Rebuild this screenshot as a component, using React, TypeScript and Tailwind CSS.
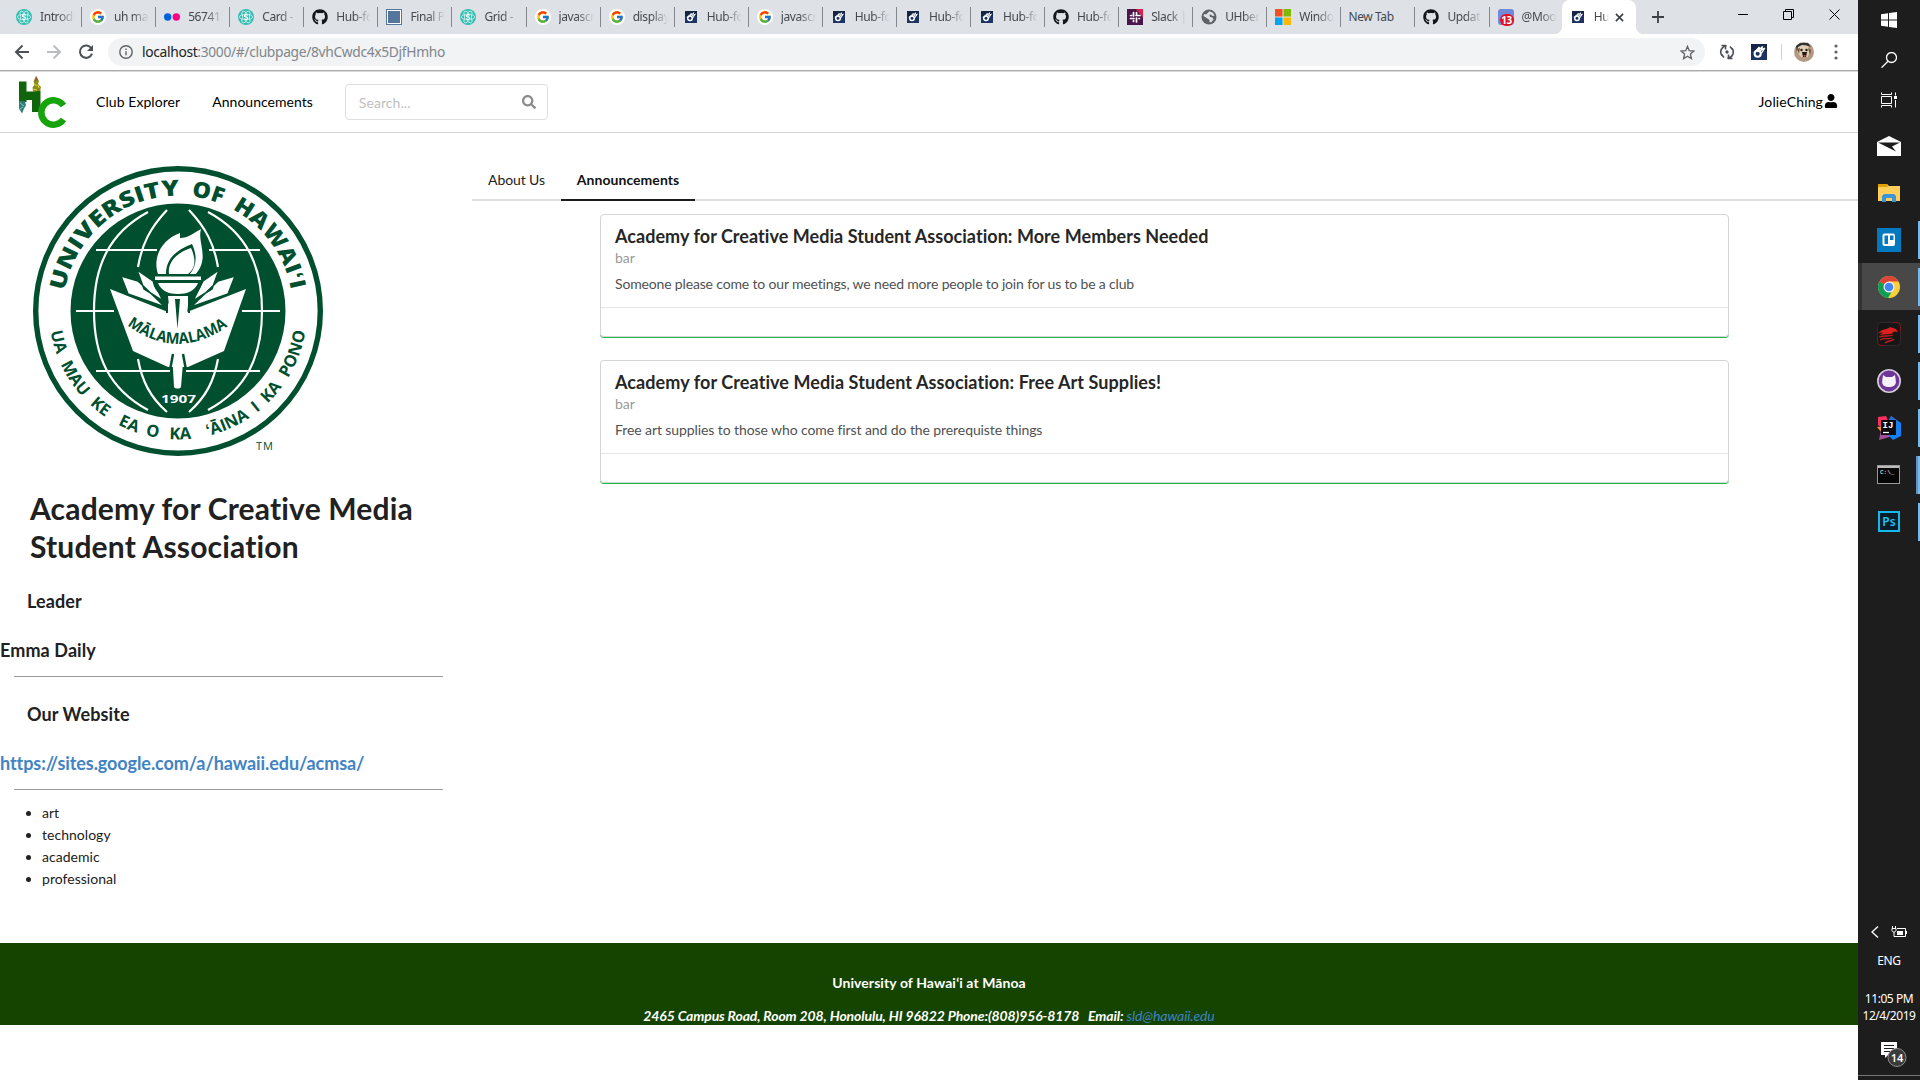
import React from "react";
import { FaGithub, FaSearch, FaUser } from "react-icons/fa";
import { FcGoogle } from "react-icons/fc";

const FAVICON = "block h-4 w-4 shrink-0";

function SemanticIcon() {
  return (
    <svg viewBox="0 0 16 16" className={FAVICON}>
      <circle cx="8" cy="8" r="8" fill="#35bdb2" />
      <g fill="none" stroke="#d5f3f0" strokeWidth=".8">
        <ellipse cx="8" cy="8" rx="6.6" ry="2.7" />
        <ellipse cx="8" cy="8" rx="6.6" ry="2.7" transform="rotate(60 8 8)" />
        <ellipse cx="8" cy="8" rx="6.6" ry="2.7" transform="rotate(120 8 8)" />
      </g>
      <circle cx="8" cy="8" r="3" fill="#35bdb2" />
      <path d="M9.8 6.3C8.8 5.3 6.5 5.6 6.5 6.9C6.5 8.2 9.7 7.7 9.7 9.2C9.7 10.5 7.3 10.7 6.2 9.7" fill="none" stroke="#fff" strokeWidth="1.3" />
    </svg>
  );
}

function GoogleIcon() {
  return (
    <span className="flex h-4 w-4 shrink-0 items-center justify-center rounded-full bg-white">
      <FcGoogle size={14} />
    </span>
  );
}

function FlickrIcon() {
  return (
    <svg viewBox="0 0 16 16" className={FAVICON}>
      <circle cx="3.7" cy="8" r="3.7" fill="#0063dc" />
      <circle cx="12.3" cy="8" r="3.7" fill="#ff0084" />
    </svg>
  );
}

function MeteorIcon({ size = 16, pad = 2 }: { size?: number; pad?: number }) {
  return (
    <svg viewBox="0 0 12 12" width={size - pad * 2} height={size - pad * 2} className="block shrink-0" style={{ margin: pad }}>
      <rect width="12" height="12" fill="#1d3462" />
      <rect width="12" height="5" fill="#152545" />
      <circle cx="5" cy="7.3" r="2.3" fill="none" stroke="#fff" strokeWidth="1.5" />
      <path d="M2.200 6.500L6.300 2.300L5.500 4.700L8.700 1.800L7.400 4.800L10.400 3L7.700 7" fill="none" stroke="#fff" strokeWidth="1" />
    </svg>
  );
}

function SlackIcon() {
  return (
    <svg viewBox="0 0 16 16" className={FAVICON}>
      <rect width="16" height="16" fill="#4a154b" />
      <path d="M9 0h7v9z" fill="#d8234f" />
      <g stroke="#fff" strokeWidth="1.7" strokeLinecap="round">
        <path d="M6.5 3.5v3.500M9.500 9v4M3.500 9.500h3.500M9 6.500h4M9.500 3.500v1.500M3.500 6.500h1M6.500 11.500v1M12 9.500h.5" />
      </g>
    </svg>
  );
}

function GlobeIcon() {
  return (
    <svg viewBox="0 0 16 16" className={FAVICON}>
      <circle cx="8" cy="8" r="7.500" fill="#5f6368" />
      <path d="M8.500 2.200l3.500 1.500 1.500 3-2 .3-1.500-1.500-1.500.5.5 2 2.500.5 1 2L10 13.500l-1.500-.5v-2L6.500 9.500 2.500 7 3 5l2 .500z" fill="#dee1e6" />
    </svg>
  );
}

function MicrosoftIcon() {
  return (
    <svg viewBox="0 0 16 16" className={FAVICON}>
      <path d="M0 0h7.500v7.500H0z" fill="#f25022" />
      <path d="M8.500 0H16v7.500H8.500z" fill="#7fba00" />
      <path d="M0 8.500h7.500V16H0z" fill="#00a4ef" />
      <path d="M8.500 8.500H16V16H8.500z" fill="#ffb900" />
    </svg>
  );
}

function DiscordBadgeIcon() {
  return (
    <span className="relative block h-4 w-4 shrink-0 rounded-[3px] bg-[#7289da]">
      <span className="absolute top-[5px] left-[2px] flex h-[12px] w-[14px] items-center justify-center rounded-full bg-[#e01020] text-[10px] leading-none font-bold tracking-[-0.5px] text-white">13</span>
    </span>
  );
}

type Kind = "semantic" | "google" | "flickr" | "github" | "square" | "meteor" | "slack" | "globe" | "ms" | "none" | "discord";

function Favicon({ kind }: { kind: Kind }) {
  switch (kind) {
    case "semantic":
      return <SemanticIcon />;
    case "google":
      return <GoogleIcon />;
    case "flickr":
      return <FlickrIcon />;
    case "github":
      return <FaGithub size={16} className="shrink-0 text-[#14171a]" />;
    case "square":
      return <span className="block h-4 w-4 shrink-0 border border-[#54759c] bg-[#54759c] shadow-[inset_0_0_0_1px_#fff]" />;
    case "meteor":
      return <MeteorIcon />;
    case "slack":
      return <SlackIcon />;
    case "globe":
      return <GlobeIcon />;
    case "ms":
      return <MicrosoftIcon />;
    case "discord":
      return <DiscordBadgeIcon />;
    default:
      return null;
  }
}

const tabs: { kind: Kind; label: string }[] = [
  { kind: "semantic", label: "Introdu" },
  { kind: "google", label: "uh ma" },
  { kind: "flickr", label: "567415" },
  { kind: "semantic", label: "Card -" },
  { kind: "github", label: "Hub-fo" },
  { kind: "square", label: "Final P" },
  { kind: "semantic", label: "Grid -" },
  { kind: "google", label: "javascr" },
  { kind: "google", label: "display" },
  { kind: "meteor", label: "Hub-fo" },
  { kind: "google", label: "javascr" },
  { kind: "meteor", label: "Hub-fo" },
  { kind: "meteor", label: "Hub-fo" },
  { kind: "meteor", label: "Hub-fo" },
  { kind: "github", label: "Hub-fo" },
  { kind: "slack", label: "Slack |" },
  { kind: "globe", label: "UHber" },
  { kind: "ms", label: "Windo" },
  { kind: "none", label: "New Tab" },
  { kind: "github", label: "Updat" },
  { kind: "discord", label: "@Moo" },
];

function TabStrip() {
  return (
    <div className="flex h-[34px] bg-[#dee1e6] pl-2 text-[12px] tracking-[-0.4px] text-[#45494d]">
      {tabs.map((t, i) => (
        <div key={i} className="flex h-[34px] w-[74.08px] shrink-0 items-center pl-2">
          <Favicon kind={t.kind} />
          <span
            className={
              t.kind === "none"
                ? "-ml-px w-[54px] overflow-hidden whitespace-nowrap"
                : "ml-2 w-[36px] overflow-hidden whitespace-nowrap [mask-image:linear-gradient(to_right,#000_50%,transparent_97%)]"
            }
          >
            {t.label}
          </span>
          {i < tabs.length - 1 && <span className="ml-auto h-5 w-px bg-[#85898e]" />}
        </div>
      ))}
      <div className="relative -ml-[2px] flex h-[34px] w-[74px] items-center rounded-t-lg bg-white pl-[8px]">
        <span className="absolute bottom-0 -left-2 h-2 w-2 bg-[radial-gradient(circle_at_0_0,#dee1e6_8px,#fff_8.5px)]" />
        <span className="absolute -right-2 bottom-0 h-2 w-2 bg-[radial-gradient(circle_at_100%_0,#dee1e6_8px,#fff_8.5px)]" />
        <MeteorIcon />
        <span className="ml-2 w-[15px] overflow-hidden whitespace-nowrap [mask-image:linear-gradient(to_right,#000_60%,transparent)]">Hu</span>
        <svg viewBox="0 0 10 10" className="ml-[6px] h-[9px] w-[9px]" stroke="#3c4043" strokeWidth="1.8">
          <path d="M1 1l8 8M9 1L1 9" />
        </svg>
      </div>
      <svg viewBox="0 0 12 12" className="mt-[11px] ml-[16px] h-3 w-3" stroke="#3c4043" strokeWidth="1.8">
        <path d="M6 0v12M0 6h12" />
      </svg>
      <div className="mr-[18px] ml-auto flex h-[28px] items-center gap-[35px]">
        <span className="h-px w-[10px] bg-black" />
        <svg viewBox="0 0 11 11" className="h-[11px] w-[11px]" fill="none" stroke="#000">
          <path d="M.5 2.500h8v8h-8zM2.500 2.500v-2h8v8h-2" />
        </svg>
        <svg viewBox="0 0 11 11" className="h-[11px] w-[11px]" stroke="#000">
          <path d="M.5.5l10 10M10.5.5l-10 10" />
        </svg>
      </div>
    </div>
  );
}

function Toolbar() {
  return (
    <div className="flex h-9 items-center bg-white">
      <svg viewBox="0 0 16 16" className="ml-[14px] h-4 w-4" fill="none" stroke="#4d5156" strokeWidth="2">
        <path d="M15 8H2M8.500 1.500L2 8l6.500 6.500" />
      </svg>
      <svg viewBox="0 0 16 16" className="ml-4 h-4 w-4" fill="none" stroke="#babcbe" strokeWidth="2">
        <path d="M1 8h13M7.500 1.500L14 8l-6.500 6.500" />
      </svg>
      <svg viewBox="0 0 16 16" className="ml-4 h-4 w-4" fill="none" stroke="#4d5156" strokeWidth="2">
        <path d="M13.300 4.200A6.200 6.200 0 1 0 14 9.700" />
        <path d="M15 1v6H9z" fill="#4d5156" stroke="none" />
      </svg>
      <div className="ml-[14px] flex h-7 w-[1597px] items-center rounded-full bg-[#f1f3f4] pr-[10px] pl-[11px]">
        <svg viewBox="0 0 14 14" className="h-[14px] w-[14px]" fill="none" stroke="#5f6368" strokeWidth="1.4">
          <circle cx="7" cy="7" r="6.2" />
          <path d="M7 6.200v4M7 3.500v1.500" />
        </svg>
        <span className="ml-[9px] text-[13.8px] tracking-[-0.33px] text-[#80868b]">
          <span className="text-[#202124]">localhost</span>:3000/#/clubpage/8vhCwdc4x5DjfHmho
        </span>
        <svg viewBox="0 0 16 16" className="ml-auto h-[15px] w-[15px]" fill="none" stroke="#5f6368" strokeWidth="1.4">
          <path d="M8 1.500l1.900 4.600 4.900.4-3.700 3.200 1.100 4.800L8 12l-4.200 2.500 1.100-4.800L1.200 6.500l4.900-.4z" />
        </svg>
      </div>
      <svg viewBox="0 0 16 16" className="ml-[14px] h-4 w-4" fill="none" stroke="#4d5156" strokeWidth="1.6">
        <path d="M8.500 14.200A6.200 6.200 0 0 0 13 4.300M7.500 1.800A6.200 6.200 0 0 0 3 11.700" />
        <path d="M2.500 1.500h4v4M13.500 14.500h-4v-4M11 2.500l2.500 3M5 13.500l-2.500-3" />
        <circle cx="8" cy="8" r="1.700" fill="#4d5156" stroke="none" />
      </svg>
      <span className="ml-4">
        <MeteorIcon size={16} pad={0} />
      </span>
      <span className="ml-[14px] h-4 w-px bg-[#cfd1d4]" />
      <svg viewBox="0 0 20 20" className="ml-3 h-5 w-5">
        <circle cx="10" cy="10" r="10" fill="#b39b83" />
        <path d="M2 4L6 1h8l3 4-3-1-4-1-4 2-3 6z" fill="#30343a" />
        <path d="M4 5l4-2 6 1 2 5-2 6H7L3 10z" fill="#dfcdb4" />
        <path d="M3 7l3-1-1 6zM14 6l3 2-1 5z" fill="#775238" />
        <circle cx="7.500" cy="8" r="1.200" fill="#231a16" />
        <circle cx="12.500" cy="8" r="1.200" fill="#231a16" />
        <path d="M8 10h5l-1 5h-3z" fill="#251713" />
        <path d="M9.500 13h2l-.5 3z" fill="#df5265" />
      </svg>
      <svg viewBox="0 0 4 16" className="ml-[20px] h-4 w-1" fill="#5f6368">
        <circle cx="2" cy="2" r="1.600" />
        <circle cx="2" cy="8" r="1.600" />
        <circle cx="2" cy="14" r="1.600" />
      </svg>
    </div>
  );
}

function ClubLogo() {
  return (
    <svg viewBox="0 0 50 54" className="ml-[17px] h-[54px] w-[50px]">
      <path d="M2 6.500h7.500v10H15l8.500-1V37H15V25H9.500v2H2z" fill="#0f640c" />
      <path d="M46.500 30.500A12.200 12.200 0 1 0 46.500 44.500" fill="none" stroke="#17a30b" strokeWidth="6.500" />
      <path d="M19 1l3 5-1 3 3 3-1 4-7 .500-.500-4 2-3-1-3z" fill="#8b8b20" />
      <path d="M19 1l2 4-3 1z" fill="#a64f35" />
      <path d="M17 9l3 2M16 14l4 1M21 10l1 3" stroke="#e1dc28" />
      <path d="M2 26l6 .500 1 4-2 3-2 5-3-5z" fill="#337c7c" />
      <path d="M3 28l4 3M3 34l3-2" stroke="#79d0b5" />
    </svg>
  );
}

function SiteNav() {
  return (
    <nav className="flex h-[61px] items-center border-b border-[#d4d4d5] bg-white text-[14px] text-black">
      <ClubLogo />
      <span className="-mt-[2px] ml-[29px] tracking-[0.07px]">Club Explorer</span>
      <span className="-mt-[2px] ml-8 tracking-[0.02px]">Announcements</span>
      <div className="ml-8 flex h-[36px] w-[203px] items-center justify-between rounded border border-[#dededf] pr-[11px] pl-[13px]">
        <span className="tracking-[0.07px] text-[#c0c0c0]">Search...</span>
        <FaSearch size={14} className="text-[#8b8b8b]" />
      </div>
      <span className="mr-5 -mt-[2px] ml-auto flex items-center tracking-[0.12px]">
        JolieChing
        <FaUser size={14} className="ml-px" />
      </span>
    </nav>
  );
}

const mottoWords = [
  { text: "UA", at: 13.5 },
  { text: "MAU", at: 55.4 },
  { text: "KE", at: 95.5 },
  { text: "EA", at: 130.6 },
  { text: "O", at: 156.3 },
  { text: "KA", at: 185 },
  { text: "ʻĀINA", at: 235.5 },
  { text: "I", at: 270 },
  { text: "KA", at: 292.5 },
  { text: "PONO", at: 339 },
];

const nameWords = [
  { text: "UNIVERSITY", at: 0, length: 162 },
  { text: "OF", at: 174, length: 31 },
  { text: "HAWAIʻI", at: 217, length: 103 },
];

function UniversitySeal() {
  return (
    <svg viewBox="0 0 340 320" className="block h-[320px] w-[340px]">
      <defs>
        <path id="seal-top" d="M64.700 141A115 115 0 0 1 291.300 141" />
        <path id="seal-bottom" d="M50.500 180A129 129 0 0 0 305.500 180" />
        <path id="seal-book" d="M127 175Q178 213 231 174" />
      </defs>
      <circle cx="178" cy="161" r="142.3" fill="#fff" stroke="#00502f" strokeWidth="5.4" />
      <circle cx="178" cy="161" r="107.5" fill="#00502f" />
      <g fill="none" stroke="#fff" strokeWidth="2.2">
        <path d="M148 62C109 83 94 116 94 161s15 78 54 99M208 62c39 21 54 54 54 99s-15 78-54 99" />
        <path d="M167 60C150 78 142 94 138 117M189 60c17 18 25 34 29 57M138 209c4 22 12 38 29 53M218 209c-4 22-12 38-29 53" />
        <path d="M96 100h61M209 100h51M76 161h38M242 161h38M96 221h74M186 221h74" />
      </g>
      <path d="M110 139L168 162V152L177.500 178L187 152V162L246 139L224 201L188 217H168L133 201Z" fill="#fff" />
      <g fill="#fff" stroke="#00502f" strokeWidth="1.5">
        <path d="M121 126l17 5 27 26-37-13zM137 120l16 11 10 20-19-12zM235 126l-17 5-27 26 37-13zM219 120l-16 11-10 20 19-12z" />
      </g>
      <path d="M153 124h49v9c-2 9-10 14-18 15h-13c-9-1-16-6-18-15z" fill="#00502f" />
      <g fill="#fff">
        <path d="M155 126.500h46v3.500h-46zM158 133h40c-3 8-11 11-20 11s-17-3-20-11z" />
        <path d="M168 146h21l-6 55h-9z" />
        <path d="M172 201h12l-3 36c-1 2-6 2-7 0z" />
        <path d="M158 124c-6-18 5-35 22-41v5c8 0 14-5 21-9-4 14 9 28-5 45h-6c6-8 8-17 2-30-16 6-26 15-26 30z" />
        <path d="M169 124c-2-12 9-22 22-26 5 11 5 20-3 26z" />
      </g>
      <path d="M173 204l-3 16M183 204l3 16" stroke="#00502f" strokeWidth="2.5" fill="none" />
      <path d="M175 149h5l-2.500 30z" fill="#00502f" />
      <path d="M167 146v17M189 146v17" stroke="#00502f" strokeWidth="2" />
      <g fill="#00502f" fontFamily="'Open Sans', sans-serif">
        {nameWords.map((w) => (
          <text key={w.at} fontSize="22" fontWeight="800">
            <textPath href="#seal-top" startOffset={w.at} textLength={w.length} lengthAdjust="spacingAndGlyphs">
              {w.text}
            </textPath>
          </text>
        ))}
        {mottoWords.map((w) => (
          <text key={w.at} fontSize="16.500" fontWeight="700" textAnchor="middle">
            <textPath href="#seal-bottom" startOffset={w.at}>
              {w.text}
            </textPath>
          </text>
        ))}
        <text fontSize="15.500" fontWeight="700">
          <textPath href="#seal-book" textLength="109" lengthAdjust="spacingAndGlyphs">MĀLAMALAMA</textPath>
        </text>
      </g>
      <text x="161" y="253" fontSize="11" fontWeight="700" fill="#fff" fontFamily="'Open Sans', sans-serif" textLength="35" lengthAdjust="spacingAndGlyphs">1907</text>
      <text x="256" y="300" fontSize="11" fill="#00502f" fontFamily="'Open Sans', sans-serif" textLength="17">TM</text>
    </svg>
  );
}

function Sidebar() {
  return (
    <aside className="w-[472px] shrink-0 text-[#212121]">
      <div className="h-[337px] pt-[17px]">
        <UniversitySeal />
      </div>
      <h1 className="mt-[19px] ml-[30px] text-[30px] leading-[38px] font-bold tracking-[0.17px]">
        Academy for Creative Media
        <br />
        Student Association
      </h1>
      <h3 className="mt-[24px] ml-[27px] text-[18px] leading-[24px] font-bold tracking-[0.1px]">Leader</h3>
      <h3 className="mt-[25px] text-[18px] leading-[24px] font-bold tracking-[0.1px]">Emma Daily</h3>
      <hr className="mt-[14px] ml-[14px] w-[429px] border-t border-[#9b9b9b]" />
      <h3 className="mt-[25px] ml-[27px] text-[18px] leading-[24px] font-bold tracking-[0.1px]">Our Website</h3>
      <a className="mt-[25px] block text-[18px] leading-[24px] font-bold tracking-[-0.08px] text-[#4183c4]">https://sites.google.com/a/hawaii.edu/acmsa/</a>
      <hr className="mt-[14px] ml-[14px] w-[429px] border-t border-[#9b9b9b]" />
      <ul className="mt-[12px] ml-[42px] list-disc text-[14px] leading-[22px] tracking-[0.03px]">
        <li>art</li>
        <li>technology</li>
        <li>academic</li>
        <li>professional</li>
      </ul>
    </aside>
  );
}

const posts = [
  {
    title: "Academy for Creative Media Student Association: More Members Needed",
    titleSpacing: "tracking-[0.045px]",
    body: "Someone please come to our meetings, we need more people to join for us to be a club",
    spacing: "tracking-[-0.16px]",
  },
  {
    title: "Academy for Creative Media Student Association: Free Art Supplies!",
    titleSpacing: "tracking-[0.08px]",
    body: "Free art supplies to those who come first and do the prerequiste things",
    spacing: "tracking-[-0.09px]",
  },
];

function ClubContent() {
  return (
    <main className="flex-1">
      <div className="mt-[28px] flex h-[40px] border-b-2 border-[#dedede] text-[14px] text-[#212121]">
        <span className="flex w-[89px] justify-center pt-[8px] tracking-[-0.1px]">About Us</span>
        <span className="flex h-[40px] w-[134px] justify-center border-b-2 border-[#1b1c1d] pt-[8px] font-bold tracking-[0.05px] text-[#111]">Announcements</span>
      </div>
      <div className="mt-[13px] ml-[128px] flex w-[1129px] flex-col gap-[23px]">
        {posts.map((p) => (
          <article key={p.title} className="h-[123px] rounded-[4px] border border-[#d4d4d5] shadow-[0_1px_0_0_#21ba45]">
            <div className="h-[93px] border-b border-[#e6e6e6] px-[14px] pt-[10px]">
              <h2 className={`text-[18px] leading-[23px] font-bold text-[#262626] ${p.titleSpacing}`}>{p.title}</h2>
              <p className="text-[14px] leading-[20px] text-[#999]">bar</p>
              <p className={`mt-[6px] text-[14px] leading-[20px] text-[#515151] ${p.spacing}`}>{p.body}</p>
            </div>
          </article>
        ))}
      </div>
    </main>
  );
}

function Taskbar() {
  return (
    <aside className="flex w-[62px] shrink-0 flex-col bg-[#1d1d1d] text-white">
      <div className="flex h-10 items-center justify-center">
        <svg viewBox="0 0 16 16" className="h-4 w-4" fill="#fff">
          <path d="M0 2.300l7-1v6.200H0zM8 1.100L16 0v7.500H8zM0 8.500h7v6.200l-7-1zM8 8.500h8V16l-8-1.100z" />
        </svg>
      </div>
      <div className="flex h-10 items-center justify-center">
        <svg viewBox="0 0 16 16" className="h-4 w-4" fill="none" stroke="#fff" strokeWidth="1.3">
          <circle cx="10.500" cy="5.500" r="5" />
          <path d="M7 9.200L.5 15.700" />
        </svg>
      </div>
      <div className="mb-[2px] flex h-10 items-center justify-center">
        <svg viewBox="0 0 16 16" className="h-4 w-4" fill="none" stroke="#fff">
          <path d="M.5.500v2h10v-2M.5 15.500v-2h10v2M.5 4.500h10v7H.5zM14.500.500v3M14.500 8v7.500" />
          <path d="M13 4h3v3h-3z" fill="#fff" stroke="none" />
        </svg>
      </div>
      <AppSlot>
        <svg viewBox="0 0 24 20" className="h-5 w-6">
          <path d="M0 6l12-6 12 6v14H0z" fill="#fff" />
          <path d="M1 6.500h22l-8 4 4 5-6-3z" fill="#1d1d1d" />
        </svg>
      </AppSlot>
      <AppSlot>
        <svg viewBox="0 0 22 18" className="h-[18px] w-[22px]">
          <path d="M0 0h9l2 2h11v15H0z" fill="#ffcf59" />
          <path d="M0 0h9l1 3H0z" fill="#dfa000" />
          <path d="M4 18v-6l2-2h10l2 2v6h-4v-4H8v4z" fill="#3a94dc" />
        </svg>
      </AppSlot>
      <AppSlot running>
        <svg viewBox="0 0 24 24" className="h-6 w-6">
          <rect width="24" height="24" fill="#0079bf" />
          <rect x="5.500" y="5.500" width="12.500" height="12.500" rx="2" fill="#fff" />
          <path d="M7.500 7.500h3.500v8.500H7.500zM13 7.500h3.500V12H13z" fill="#0079bf" />
        </svg>
      </AppSlot>
      <AppSlot running active>
        <svg viewBox="0 0 24 24" className="h-6 w-6">
          <circle cx="12" cy="12" r="11" fill="#f9cf3b" />
          <path d="M12 12L2.500 6.500A11 11 0 0 1 21.500 6.500H12z" fill="#db4437" />
          <path d="M12 12l-9.500-5.500A11 11 0 0 0 11 23l5-8.500z" fill="#0f9d58" />
          <circle cx="12" cy="12" r="5.500" fill="#f3f3f3" />
          <circle cx="12" cy="12" r="4.300" fill="#4285f4" />
        </svg>
      </AppSlot>
      <AppSlot running>
        <svg viewBox="0 0 24 24" className="h-6 w-6">
          <rect x=".5" y=".5" width="23" height="23" rx="4" fill="#161616" stroke="#34282a" />
          <path d="M16 .5h4q3.500 0 3.500 4v5M.5 15v5q0 3.500 4 3.500h3" fill="none" stroke="#83121b" />
          <path d="M1 11c5-5 9-3 12-6l6 2 2 3-4-.500-2 2c-4 1.500-8 0-13 2l4-3z" fill="#dc1f20" />
          <path d="M2 15c6-2 9 0 14-2M3 18c5-3 8 0 12-2M8 21c4-3 6-1 9-4" fill="none" stroke="#c41c1e" strokeWidth="1.3" />
        </svg>
      </AppSlot>
      <AppSlot running>
        <svg viewBox="0 0 24 24" className="h-6 w-6">
          <circle cx="12" cy="12" r="11.2" fill="#6e3696" stroke="#d5cbdc" strokeWidth="1.6" />
          <path d="M6 6l3 2h6l3-2 .7 5c1 6-3 7-6.700 7s-7.700-1-6.700-7z" fill="#f5f1f7" />
        </svg>
      </AppSlot>
      <AppSlot running>
        <svg viewBox="0 0 24 24" className="h-6 w-6">
          <path d="M1 1l8-1 3 7-3 8-8-6z" fill="#fc315d" />
          <path d="M0 11l7-1-2 7z" fill="#f68b24" />
          <path d="M4 14h12v6l-14 4z" fill="#a4509a" />
          <path d="M14 0l10 7v13l-8 4-5-5z" fill="#167ff5" />
          <path d="M14 0l6 5-7 12-4-9z" fill="#3568cf" />
          <rect x="4" y="4" width="15" height="15" fill="#080808" />
          <text x="5.500" y="12" fontSize="9" fontWeight="bold" fill="#fff" fontFamily="'Liberation Mono', monospace">IJ</text>
          <path d="M6 16.500h6" stroke="#fff" strokeWidth="1.3" />
        </svg>
      </AppSlot>
      <AppSlot running>
        <svg viewBox="0 0 24 20" className="h-5 w-6">
          <rect x=".5" y=".5" width="22" height="18" fill="#060606" stroke="#999" />
          <path d="M1 1h21v2H1z" fill="#bbb" />
          <text x="3" y="9" fontSize="6" fill="#fff" fontFamily="'Liberation Mono', monospace">C:\_</text>
        </svg>
        <span className="absolute top-[5px] right-[2px] h-[38px] w-[2px] bg-[#6492b8]" />
      </AppSlot>
      <AppSlot running>
        <span className="flex h-[21px] w-[22px] items-center justify-center border-2 border-[#15b9ed] bg-[#071d2a] text-[12px] leading-none font-semibold text-[#20c3f5]">Ps</span>
      </AppSlot>
      <div className="mt-auto flex h-6 items-center pl-[13px]">
        <svg viewBox="0 0 8 12" className="h-3 w-2" fill="none" stroke="#fff" strokeWidth="1.3">
          <path d="M7 .5L1 6l6 5.500" />
        </svg>
        <svg viewBox="0 0 16 12" className="ml-[12px] h-3 w-4" fill="none" stroke="#fff">
          <path d="M6 2.500h8.500v8H3V6M15.500 5v3M1.500 0v2M4.500 0v2M1 2.500h4v2c0 2-4 2-4 0z" />
          <path d="M6 5h6v4H6z" fill="#fff" stroke="none" />
        </svg>
      </div>
      <span className="mt-[7px] text-center text-[12px] leading-5 tracking-[-0.35px]">ENG</span>
      <div className="mt-[19px] text-center text-[12px] leading-[17px] tracking-[-0.45px]">
        11:05 PM
        <br />
        12/4/2019
      </div>
      <div className="mt-[18px] h-[33px]">
        <svg viewBox="0 0 32 26" className="ml-[23px] h-[26px] w-8">
          <path d="M0 0h16v13H7l-3 3v-3H0z" fill="#fff" />
          <path d="M3 3.500h10M3 6.500h10M3 9.500h6" stroke="#1d1d1d" />
          <circle cx="16" cy="15.500" r="9" fill="#3b3b3b" stroke="#8f8f8f" />
          <text x="16" y="19.500" fontSize="11" fontWeight="600" fill="#fff" textAnchor="middle" fontFamily="'Noto Sans', sans-serif">14</text>
        </svg>
      </div>
      <div className="h-[5px] border-t border-[#777]" />
    </aside>
  );
}

function AppSlot({ children, running, active }: { children: React.ReactNode; running?: boolean; active?: boolean }) {
  return (
    <div className={`relative flex h-[47px] shrink-0 items-center justify-center ${active ? "border-l-4 border-[#333] bg-[#484848] pr-1" : ""}`}>
      {children}
      {running && <span className="absolute top-[5px] right-0 h-[38px] w-[2px] bg-[#76b9ed]" />}
    </div>
  );
}

export default function App() {
  return (
    <div className="flex h-[1080px] w-[1920px] overflow-hidden bg-white font-['Noto_Sans',sans-serif]">
      <div className="flex w-[1858px] shrink-0 flex-col">
        <TabStrip />
        <Toolbar />
        <div className="h-[2px] shrink-0 border-t border-[#ababab] bg-[#d9d9d9]" />
        <div className="flex flex-1 flex-col font-[Lato,sans-serif]">
          <SiteNav />
          <div className="flex h-[810px]">
            <Sidebar />
            <ClubContent />
          </div>
          <footer className="h-[82px] overflow-hidden bg-[#144400] pt-[30px] text-center text-[14px] leading-[20px] font-bold text-white">
            <p className="tracking-[0.08px]">University of Hawaiʻi at Mānoa</p>
            <p className="mt-[13px] tracking-[-0.12px] italic">
              2465 Campus Road, Room 208, Honolulu, HI 96822 Phone:(808)956-8178 &nbsp; Email: <a className="font-normal text-[#4183c4]">sld@hawaii.edu</a>
            </p>
          </footer>
        </div>
      </div>
      <Taskbar />
    </div>
  );
}
